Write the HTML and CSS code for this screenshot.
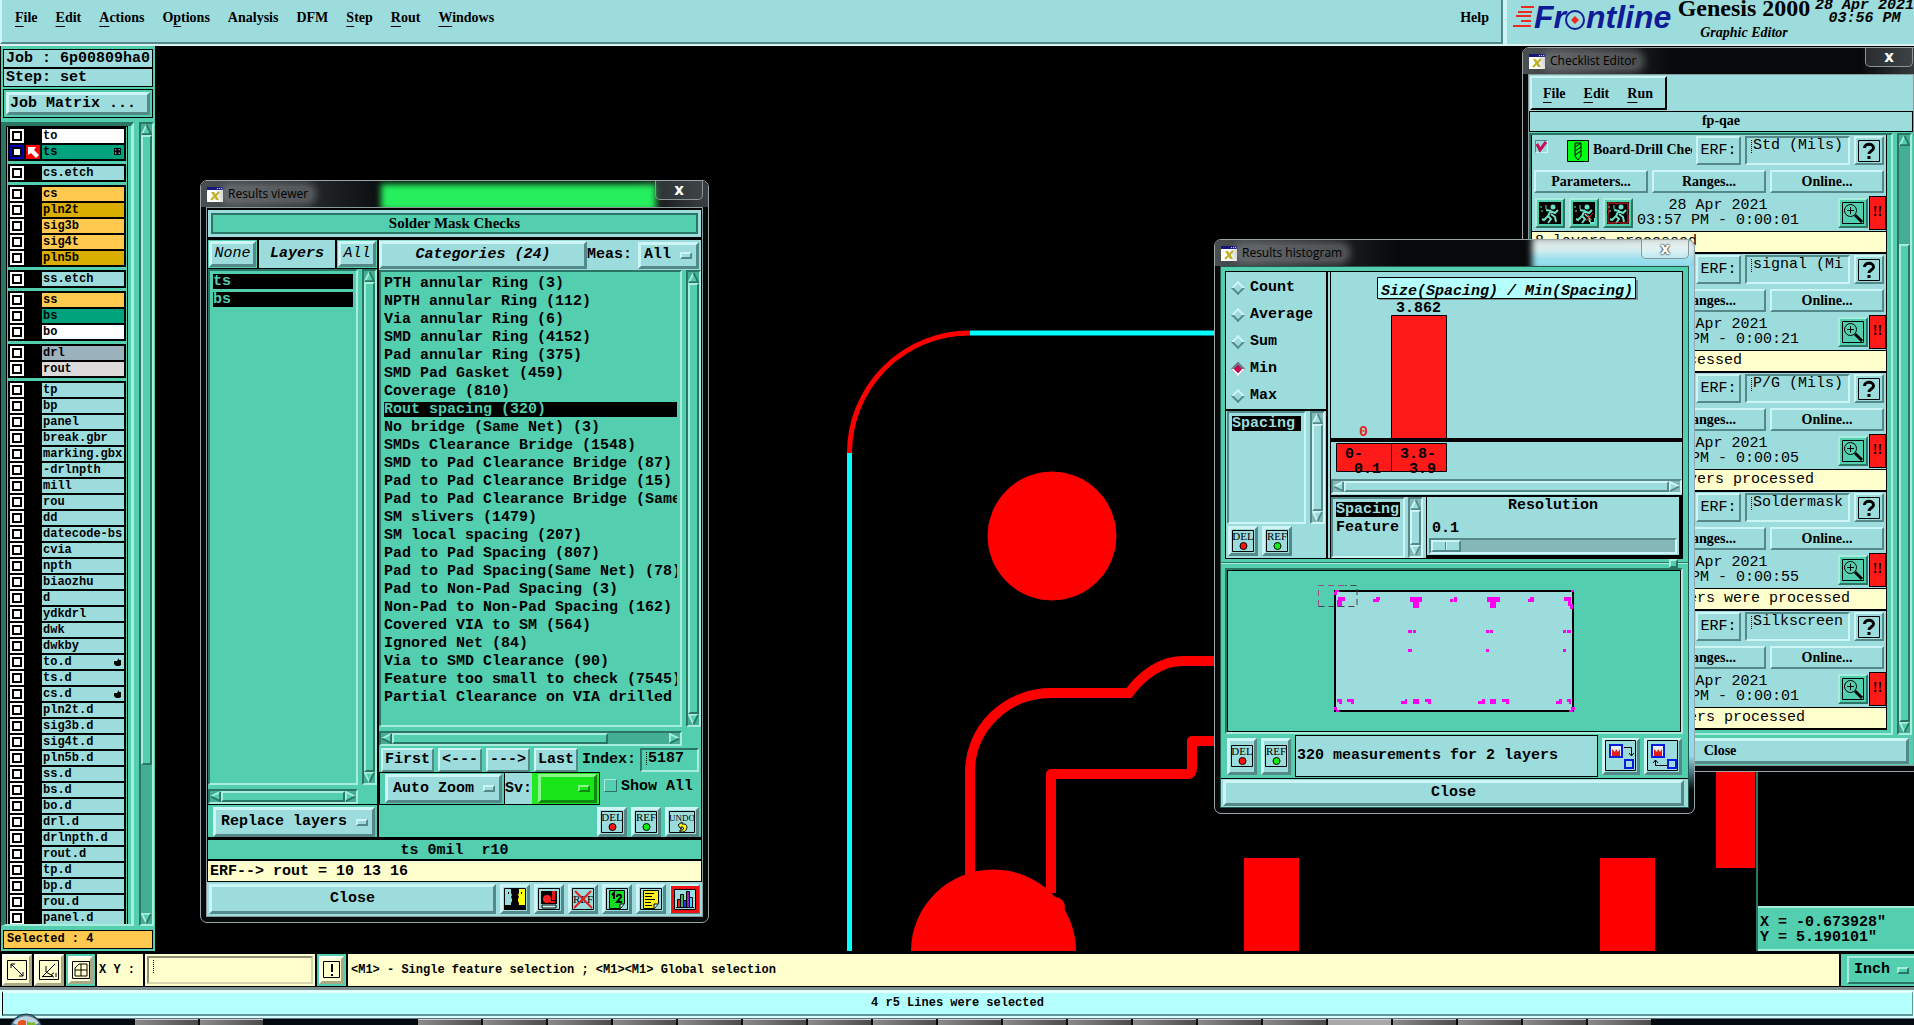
FILE: index.html
```
<!DOCTYPE html>
<html lang="en">
<head>
    <meta charset="UTF-8">
    <meta name="viewport" content="width=device-width, initial-scale=1.0">
    <title>Genesis 2000 - Graphic Editor</title>

    <link rel="stylesheet" href="styles.css">

</head>
<body>

    <!-- icons -->
    <svg class="defs" aria-hidden="true">
        <symbol id="up" viewBox="0 0 12 12"><path d="M6 0 L0 12 H12 Z" class="fill"/><path d="M6 1 L1 11" class="lt"/><path d="M6 1 L11 11 H1" class="dk"/></symbol>
        <symbol id="down" viewBox="0 0 12 12"><path d="M6 12 L0 0 H12 Z" class="fill"/><path d="M11 1 H1 L6 11" class="lt"/><path d="M11 1 L6 11" class="dk"/></symbol>
        <symbol id="left" viewBox="0 0 12 12"><path d="M0 6 L12 0 V12 Z" class="fill"/><path d="M11 1 L1 6" class="lt"/><path d="M1 6 L11 11 V1" class="dk"/></symbol>
        <symbol id="right" viewBox="0 0 12 12"><path d="M12 6 L0 0 V12 Z" class="fill"/><path d="M11 6 L1 1 V11" class="lt"/><path d="M1 11 L11 6" class="dk"/></symbol>

        <symbol id="xwin" viewBox="0 0 16 15"><path d="M0 0h16v15H0z" fill="#fff"/><path d="M0 0h16v3H0z" fill="#15157c"/><path d="M10 1h1v1h-1zM12 1h1v1h-1zM14 1h1v1h-1z" fill="#ccd"/><path d="M4 5h3l5 8H9z" fill="#c3b41c"/><path d="M12 5L4 13" stroke="#c3b41c" stroke-width="2"/></symbol>

        <symbol id="del" viewBox="0 0 22 22"><path d="M.5.5h21v21H.5z" fill="none" stroke="#000"/><text x="11" y="10" text-anchor="middle">DEL</text><circle cx="11.500" cy="16" r="3.500" fill="#f11" stroke="#000"/></symbol>
        <symbol id="ref" viewBox="0 0 22 22"><path d="M.5.5h21v21H.5z" fill="none" stroke="#000"/><text x="11" y="10" text-anchor="middle">REF</text><circle cx="11.500" cy="16" r="3.500" fill="#1e1" stroke="#000"/></symbol>
        <symbol id="undo" viewBox="0 0 26 22"><path d="M.5.5h25v21H.5z" fill="none" stroke="#000"/><text x="13" y="10" text-anchor="middle" class="narrow">UNDO</text><path d="M9 14l4-3v2h2c4 0 4 7-1 8h-3v-2h2c2 0 2-3 0-3h-1v2z" fill="#fe2" stroke="#000"/></symbol>

        <symbol id="faces" viewBox="0 0 22 22"><path d="M0 0h11v17H0z" fill="#9ddcdc"/><path d="M11 0h11v17H11z" fill="#ff1"/><path d="M.5.5h21v21H.5z" fill="none" stroke="#000"/><path d="M7 1h8v4l-1 2 1 2-1 2v2l1 2v2h7v5H0v-5h7v-2l1-2v-2L7 9l1-2-1-2zM4 4h1v2H4zM17 4h1v2h-1z"/></symbol>
        <symbol id="machine" viewBox="0 0 22 22"><path d="M.5.5h21v21H.5z" fill="#9ddcdc" stroke="#000"/><path d="M3 3h16v13H3z"/><circle cx="9" cy="11" r="4" fill="#f22"/><path d="M14 3h3v9h-3zM12 13h5v2h-5z" fill="#e11"/><path d="M4 17h14v3H4z" fill="#cff5f5" stroke="#000"/></symbol>
        <symbol id="noref" viewBox="0 0 22 22"><path d="M.5.5h21v21H.5z" fill="none" stroke="#000"/><text x="11" y="15" text-anchor="middle">REF</text><path d="M3 3l17 17M19 3L2 20" stroke="#e1221c" stroke-width="2"/></symbol>
        <symbol id="onetwo" viewBox="0 0 22 22"><path d="M.5.5h21v21H.5z" fill="none" stroke="#000"/><path d="M3.500 2.500h15v13l-4 5h-11z" fill="#15dd22" stroke="#000"/><path d="M18 16h-4v4" fill="#cff" stroke="#000"/><path d="M6 7l2-2v6M11 9c0-3 5-3 4 0l-4 5h5" fill="none" stroke="#000" stroke-width="2"/></symbol>
        <symbol id="note" viewBox="0 0 22 22"><path d="M.5.5h21v21H.5z" fill="none" stroke="#000"/><path d="M3.500 2.500h15v13l-4 5h-11z" fill="#fe2" stroke="#000"/><path d="M18 16h-4v4" fill="#cff" stroke="#000"/><path d="M5 5.500h9M5 8.500h7M5 11.500h10M5 14.500h6M5 17.500h7" stroke="#000"/></symbol>
        <symbol id="chart" viewBox="0 0 28 27"><path d="M1.500 1.500h25v24h-25z" fill="#9ddcdc" stroke="#f01212" stroke-width="3"/><path d="M3.500 3.500h21v20h-21z" fill="none" stroke="#000"/><path d="M5 21.500h18" stroke="#000"/><path d="M6.500 13.500h3v8h-3z" fill="#e22" stroke="#000"/><path d="M9.500 8.500h3v13h-3z" fill="#3b5" stroke="#000"/><path d="M12.500 14.500h3v7h-3z" fill="#23f" stroke="#000"/><path d="M15.500 5.500h3v16h-3z" fill="#92b" stroke="#000"/><path d="M18.500 11.500h3v10h-3z" fill="#3df" stroke="#000"/></symbol>

        <symbol id="tocopy" viewBox="0 0 32 32"><path d="M.5.5h30v30H.5z" fill="none" stroke="#000"/><path d="M5 5h12v12H5z" fill="#eee" stroke="#0a1be0" stroke-width="2"/><path d="M7 16V9l3 3 1-3 2 3 2-3v7z" fill="#e11b1b"/><path d="M20 20h8v8h-8z" fill="#9ddcdc" stroke="#0a1be0" stroke-width="2"/><path d="M19 7.500h7.500V16M24 13l2.500 3 2.500-3" fill="none" stroke="#000"/></symbol>
        <symbol id="fromcopy" viewBox="0 0 32 32"><path d="M.5.5h30v30H.5z" fill="none" stroke="#000"/><path d="M5 5h12v12H5z" fill="#eee" stroke="#0a1be0" stroke-width="2"/><path d="M7 16V9l3 3 1-3 2 3 2-3v7z" fill="#e11b1b"/><path d="M21 20h8v8h-8z" fill="#9ddcdc" stroke="#0a1be0" stroke-width="2"/><path d="M20 25.500H8.500V20M6 23l2.500-3 2.500 3" fill="none" stroke="#000"/></symbol>

        <symbol id="man" viewBox="0 0 22 22"><path d="M0 0h22v22H0z"/><circle cx="14" cy="5" r="2.500" fill="#6fe0c4"/><path d="M12 8l-3 6 3 3-3 4M10 13l-5 5-2-1M11 9l5 2 3-3M12 9L7 8M12 12l4 3 1 5" fill="none" stroke="#6fe0c4" stroke-width="2"/><path d="M1 5h2M6 4h2M2 9h2M6 6h2" stroke="#6fe0c4"/></symbol>
        <symbol id="mancut" viewBox="0 0 22 22"><use href="#man"/><path d="M13 12l6 6M20 11l-7 8" stroke="#d22"/><path d="M17 21h5v-5" stroke="#6fe0c4" fill="none" stroke-width="2"/></symbol>
        <symbol id="manframe" viewBox="0 0 22 22"><use href="#man"/><path d="M1 1h7l2 1 2-1h9v7l-1 2 1 2v9h-8l-2-1-2 1H1v-9l1-2-1-2z" fill="none" stroke="#e22"/></symbol>
        <symbol id="lens" viewBox="0 0 22 22"><path d="M.5.5h21v21H.5z" fill="#53ceaf" stroke="#000"/><circle cx="8.500" cy="8.500" r="6" fill="none" stroke="#000"/><path d="M5 8.500h7M8.500 5v7" stroke="#000"/><path d="M13 13l7 7" stroke="#000" stroke-width="3"/></symbol>
        <symbol id="drill" viewBox="0 0 22 22"><path d="M.5.5h21v21H.5z" fill="#0f1" stroke="#000"/><path d="M8 3h6v13l-3 4-3-4zM8 7l6-4M8 11l6-4M8 15l6-4" fill="none" stroke="#000"/></symbol>
        <symbol id="signal" viewBox="0 0 22 22"><path d="M.5.5h21v21H.5z" fill="#ffc84f" stroke="#000"/><path d="M4 16h6V6h8" fill="none" stroke="#000" stroke-width="2"/></symbol>
        <symbol id="help" viewBox="0 0 22 22"><path d="M.5.5h21v21H.5z" fill="none" stroke="#000"/><path d="M6.500 8c0-5 9-5 9 0 0 3-4.500 3-4.500 6M11 16V19" fill="none" stroke="#000" stroke-width="3"/></symbol>
        <symbol id="check" viewBox="0 0 13 13"><path d="M2 4l3 6 6-8" fill="none" stroke="#c0105a" stroke-width="3"/></symbol>

        <symbol id="diag" viewBox="0 0 20 20"><path d="M.5.5h19v19H.5z" fill="none" stroke="#000"/><path d="M4 8V4h4M4 4l12 12M16 12v4h-4" fill="none" stroke="#000"/></symbol>
        <symbol id="angle" viewBox="0 0 20 20"><path d="M.5.5h19v19H.5z" fill="none" stroke="#000"/><path d="M3 17L16 4M7 6v6l7 4M3 16.500h10M15 13c-3 0-3 4 0 4M17 13v4" fill="none" stroke="#000"/></symbol>
        <symbol id="grid" viewBox="0 0 18 18"><path d="M.5.5h17v17H.5z" fill="none" stroke="#000"/><path d="M3 7l4-4h8v12H3zM3 9h12M9 3v12" fill="none" stroke="#000"/></symbol>
        <symbol id="bang" viewBox="0 0 18 18"><path d="M.5.5h16v16H.5z" fill="none" stroke="#000"/><path d="M8 3h2v8H8zM8 13h2v2H8z"/></symbol>
        <symbol id="arrow" viewBox="0 0 14 14"><path d="M0 0h14v14H0z" fill="#f00"/><path d="M2 2h8L8 5l5 5-3 3-5-5-3 2z" fill="#fff"/></symbol>
        <symbol id="hand" viewBox="0 0 8 8"><path d="M0 3h3l2-3v2h2v5l-2 1H2L0 6z"/></symbol>
        <symbol id="pads" viewBox="0 0 7 7"><path d="M0 0h6v6H0z"/><path d="M1 1h1v1H1zM4 1h1v1H4zM1 4h1v1H1zM4 4h1v1H4z" fill="#fff"/></symbol>
    </svg>


    <header class="top teal">
        <nav class="menubar">
            <a href="#"><u>F</u>ile</a>
            <a href="#"><u>E</u>dit</a>
            <a href="#"><u>A</u>ctions</a>
            <a href="#">O<u>p</u>tions</a>
            <a href="#">Analysis</a>
            <a href="#">DFM</a>
            <a href="#"><u>S</u>tep</a>
            <a href="#"><u>R</u>out</a>
            <a href="#"><u>W</u>indows</a>
            <a href="#" class="last">Help</a>
        </nav>
        <div class="brand">
            <svg class="logo" width="160" height="42">
                <path d="M8 6h13v2H8zM5 11h14v2H5zM3 15h15v2H3zM8 20h10v2H8zM0 25h18v2H0z" fill="#f2281f"/>
                <text x="21" y="28">Fr</text>
                <circle cx="62" cy="20" r="9" fill="none" stroke="#101c96" stroke-width="2"/>
                <path d="M62 16l4 4-4 4-4-4z" fill="#f2281f"/>
                <text x="73" y="28">ntline</text>
            </svg>
            <div class="product">
                <b>Genesis 2000</b>
                <i>Graphic Editor</i>
            </div>
            <div class="clock">28 Apr 2021<br>03:56 PM</div>
        </div>
    </header>


    <main class="workspace">

        <aside class="side green">
            <div class="field">Job : 6p00809ha0</div>
            <div class="field">Step: set</div>
            <div class="matrix"><button type="button" class="btn teal">Job Matrix ...</button></div>
            <div class="layers">
                <div class="layer-view"><div class="layer-list" id="layers"></div></div>
                <div class="scrollbar v">
                    <svg><use href="#up"/></svg>
                    <div class="track"><div class="thumb part"></div></div>
                    <svg><use href="#down"/></svg>
                </div>
            </div>
            <div class="selected">Selected : 4</div>
        </aside>

        <svg class="canvas">
            <g transform="translate(-155 -46)" fill="none" stroke="#f00">
                <path d="M849.500 951V453M970 333H1214" stroke="#0ff" stroke-width="5"/>
                <path d="M849.500 453A120 120 0 0 1 970 333" stroke-width="5"/>
                <circle cx="1052" cy="536" r="64" fill="#f00"/>
                <path d="M970 890V772A81 79 0 0 1 1051 693H1129C1142 675 1162 661 1182 661H1214" stroke-width="10"/>
                <path d="M1051 893V774H1188Q1192 774 1192 768V741H1214" stroke-width="10" stroke-linejoin="round"/>
                <path d="M911 951A82 81 0 0 1 1076 951Z" fill="#f00" stroke="none"/>
                <circle cx="1055" cy="907" r="10" fill="#f00" stroke="none"/>
                <path d="M1244 858h55v93h-55zM1600 858h55v93h-55zM1716 760h39v108h-39z" fill="#f00" stroke="none"/>
                <path d="M1757 760V951" stroke="#2a7563" stroke-width="2"/>
            </g>
        </svg>

        <div class="coords green">X = -0.673928"<br>Y = 5.190101"</div>


        <!-- Checklist Editor -->
        <section class="window checklist">
            <div class="titlebar">
                <svg class="xicon"><use href="#xwin"/></svg><span class="caption">Checklist Editor</span>
                <button type="button" class="x" aria-label="Close window">x</button>
            </div>
            <div class="client teal">
                <nav class="menubar small">
                    <a href="#"><u>F</u>ile</a>
                    <a href="#"><u>E</u>dit</a>
                    <a href="#"><u>R</u>un</a>
                </nav>
                <div class="subject">fp-qae</div>
                <div class="checks green">
                    <div class="check-list teal" id="checks"></div>
                    <div class="scrollbar v">
                        <svg><use href="#up"/></svg>
                        <div class="track low"><div class="thumb"></div></div>
                        <svg><use href="#down"/></svg>
                    </div>
                </div>
                <div class="closebar green"><button type="button" class="btn teal serif">Close</button></div>
            </div>
        </section>


        <!-- Results viewer -->
        <section class="window viewer">
            <div class="titlebar">
                <span class="glow lime"></span>
                <svg class="xicon"><use href="#xwin"/></svg><span class="caption">Results viewer</span>
                <button type="button" class="x" aria-label="Close window">x</button>
            </div>
            <div class="client green">
                <div class="heading">Solder Mask Checks</div>

                <div class="columns">
                    <div class="col-layers">
                        <div class="col-head">
                            <div class="pad"><button type="button" class="btn teal">None</button></div>
                            <b class="teal">Layers</b>
                            <div class="pad"><button type="button" class="btn teal">All</button></div>
                        </div>
                        <div class="scrolled">
                            <ul class="listbox">
                                <li class="on">ts</li>
                                <li class="on">bs</li>
                            </ul>
                            <div class="scrollbar v">
                                <svg><use href="#up"/></svg><div class="track"><div class="thumb"></div></div><svg><use href="#down"/></svg>
                            </div>
                            <div class="scrollbar h">
                                <svg><use href="#left"/></svg><div class="track"><div class="thumb"></div></div><svg><use href="#right"/></svg>
                            </div>
                        </div>
                        <div class="replace">
                            <div class="option teal">
                                <select aria-label="Layer mode"><option>Replace layers</option></select>
                            </div>
                        </div>
                    </div>

                    <div class="col-cats">
                        <div class="cat-head teal">
                            <button type="button" class="btn">Categories (24)</button>
                            <label for="meas">Meas:</label>
                            <div class="option"><select id="meas"><option>All</option></select></div>
                        </div>
                        <div class="scrolled">
                            <ul class="listbox">
                                <li>PTH annular Ring (3)</li>
                                <li>NPTH annular Ring (112)</li>
                                <li>Via annular Ring (6)</li>
                                <li>SMD annular Ring (4152)</li>
                                <li>Pad annular Ring (375)</li>
                                <li>SMD Pad Gasket (459)</li>
                                <li>Coverage (810)</li>
                                <li class="on">Rout spacing (320)</li>
                                <li>No bridge (Same Net) (3)</li>
                                <li>SMDs Clearance Bridge (1548)</li>
                                <li>SMD to Pad Clearance Bridge (87)</li>
                                <li>Pad to Pad Clearance Bridge (15)</li>
                                <li>Pad to Pad Clearance Bridge (Same</li>
                                <li>SM slivers (1479)</li>
                                <li>SM local spacing (207)</li>
                                <li>Pad to Pad Spacing (807)</li>
                                <li>Pad to Pad Spacing(Same Net) (78)</li>
                                <li>Pad to Non-Pad Spacing (3)</li>
                                <li>Non-Pad to Non-Pad Spacing (162)</li>
                                <li>Covered VIA to SM (564)</li>
                                <li>Ignored Net (84)</li>
                                <li>Via to SMD Clearance (90)</li>
                                <li>Feature too small to check (7545)</li>
                                <li>Partial Clearance on VIA drilled</li>
                            </ul>
                            <div class="scrollbar v">
                                <svg><use href="#up"/></svg><div class="track"><div class="thumb"></div></div><svg><use href="#down"/></svg>
                            </div>
                            <div class="scrollbar h">
                                <svg><use href="#left"/></svg><div class="track"><div class="thumb part"></div></div><svg><use href="#right"/></svg>
                            </div>
                        </div>
                        <div class="nav">
                            <button type="button" class="btn teal">First</button>
                            <button type="button" class="btn teal">&lt;---</button>
                            <button type="button" class="btn teal">---&gt;</button>
                            <button type="button" class="btn teal">Last</button>
                            <label for="index">Index:</label>
                            <input id="index" class="caret" type="text" value="5187">
                        </div>
                        <div class="zoomrow">
                            <div class="zoombox">
                                <div class="option teal"><select aria-label="Zoom mode"><option>Auto Zoom</option></select></div>
                                <label for="sv" class="teal">Sv:</label>
                                <div class="svbox"><div class="option lime"><select id="sv"><option label=" "></option></select></div></div>
                            </div>
                            <label class="tick"><input type="checkbox">Show All</label>
                        </div>
                        <div class="tools">
                            <button type="button" class="btn teal icon" aria-label="Delete"><svg><use href="#del"/></svg></button>
                            <button type="button" class="btn teal icon" aria-label="Reference"><svg><use href="#ref"/></svg></button>
                            <button type="button" class="btn teal icon wide" aria-label="Undo"><svg><use href="#undo"/></svg></button>
                        </div>
                    </div>
                </div>

                <div class="note">ts 0mil&nbsp; r10</div>
                <div class="erf">ERF--&gt; rout = 10 13 16</div>
                <div class="foot teal">
                    <button type="button" class="btn grow">Close</button>
                    <button type="button" class="btn icon" aria-label="Compare"><svg><use href="#faces"/></svg></button>
                    <button type="button" class="btn icon" aria-label="Machine"><svg><use href="#machine"/></svg></button>
                    <button type="button" class="btn icon" aria-label="No reference"><svg><use href="#noref"/></svg></button>
                    <button type="button" class="btn icon" aria-label="Numbers"><svg><use href="#onetwo"/></svg></button>
                    <button type="button" class="btn icon" aria-label="Notes"><svg><use href="#note"/></svg></button>
                    <button type="button" class="btn icon full" aria-label="Histogram"><svg><use href="#chart"/></svg></button>
                </div>
            </div>
        </section>


        <!-- Results histogram -->
        <section class="window histogram">
            <div class="titlebar">
                <span class="glow pale"></span>
                <svg class="xicon"><use href="#xwin"/></svg><span class="caption">Results histogram</span>
                <button type="button" class="x light" aria-label="Close window">x</button>
            </div>
            <div class="client green">
                <div class="hist-top teal">
                    <div class="hist-left">
                        <fieldset class="modes">
                            <label><input type="radio" name="mode">Count</label>
                            <label><input type="radio" name="mode">Average</label>
                            <label><input type="radio" name="mode">Sum</label>
                            <label><input type="radio" name="mode" checked>Min</label>
                            <label><input type="radio" name="mode">Max</label>
                        </fieldset>
                        <div class="scrolled">
                            <ul class="listbox"><li class="on">Spacing</li></ul>
                            <div class="scrollbar v">
                                <svg><use href="#up"/></svg><div class="track"><div class="thumb"></div></div><svg><use href="#down"/></svg>
                            </div>
                        </div>
                        <div class="tools">
                            <button type="button" class="btn icon" aria-label="Delete"><svg><use href="#del"/></svg></button>
                            <button type="button" class="btn icon" aria-label="Reference"><svg><use href="#ref"/></svg></button>
                        </div>
                    </div>

                    <div class="hist-right">
                        <svg class="plot">
                            <path d="M48 5h259v20H48z" fill="#7a8c8c"/>
                            <path d="M46.500 2.500h258v21h-258z" fill="#b4fffe" stroke="#000"/>
                            <text x="50" y="20" class="title">Size(Spacing) / Min(Spacing)</text>
                            <text x="65" y="37">3.862</text>
                            <path d="M60.500 40.500h55v125h-55z" fill="#ff1a1a" stroke="#000"/>
                            <text x="28" y="161" class="zero">0</text>
                            <rect y="163" width="100%" height="4"/>
                            <path d="M5.500 168.500h55v28h-55zM60.500 168.500h55v28h-55z" fill="#ff1a1a" stroke="#000"/>
                            <text x="14" y="183">0-</text>
                            <text x="23" y="198">0.1</text>
                            <text x="69" y="183">3.8-</text>
                            <text x="78" y="198">3.9</text>
                        </svg>
                        <div class="scrollbar h">
                            <svg><use href="#left"/></svg><div class="track"><div class="thumb"></div></div><svg><use href="#right"/></svg>
                        </div>
                        <div class="res">
                            <ul class="listbox"><li class="on">Spacing</li><li>Feature</li></ul>
                            <div class="scrollbar v">
                                <svg><use href="#up"/></svg><div class="track"><div class="thumb"></div></div><svg><use href="#down"/></svg>
                            </div>
                            <div class="resolution">
                                <label for="resolution">Resolution</label>
                                <output for="resolution">0.1</output>
                                <input id="resolution" type="range" min="0" max="10" step="0.1" value="0">
                            </div>
                        </div>
                    </div>
                </div>

                <div class="sash"><span></span></div>

                <svg class="preview">
                    <rect x="108" y="21" width="238" height="120" fill="#9ddcdc" stroke="#000" stroke-width="2"/>
                    <g fill="#f0e">
                        <path d="M108 20h4v2h-4zM107 22h3v3h-3zM344 20h3v2h-3zM107 137h3v3h-3zM109 140h3v2h-3zM344 137h4v3h-4zM342 140h4v2h-4z"/>
                        <path d="M111 27h7v4h-7zM110 30h5v7h-5zM149 27h4v3h-4zM146 29h6v3h-6zM183 27h12v5h-12zM186 32h6v6h-6zM227 27h3v5h-3zM223 29h3v3h-3zM260 27h13v5h-13zM263 32h6v6h-6zM303 27h4v3h-4zM301 29h6v3h-6zM337 27h7v4h-7zM341 27h3v9h-3zM343 34h3v5h-3z"/>
                        <path d="M181 60h4v3h-4zM186 60h3v3h-3zM259 60h3v3h-3zM263 60h3v3h-3zM336 60h3v3h-3zM340 60h4v3h-4zM181 79h4v3h-4zM259 79h3v3h-3zM336 79h3v3h-3z"/>
                        <path d="M110 129h5v3h-5zM112 129h3v5h-3zM120 129h7v3h-7zM124 129h3v5h-3zM174 131h6v3h-6zM178 129h2v5h-2zM186 129h6v5h-6zM198 129h6v3h-6zM201 129h3v5h-3zM251 131h6v3h-6zM255 129h3v5h-3zM263 129h6v5h-6zM275 129h6v3h-6zM279 129h3v5h-3zM329 131h6v3h-6zM332 129h3v5h-3zM340 129h4v3h-4zM342 129h2v5h-2z"/>
                    </g>
                    <path d="M91.500 36V15.500H120" fill="none" stroke="#9b4f86" stroke-dasharray="6 4"/>
                    <path d="M91.500 36.500H130V15.500H118" fill="none" stroke="#444" stroke-dasharray="6 4"/>
                </svg>

                <div class="summary teal">
                    <button type="button" class="btn icon" aria-label="Delete"><svg><use href="#del"/></svg></button>
                    <button type="button" class="btn icon" aria-label="Reference"><svg><use href="#ref"/></svg></button>
                    <div class="count">320 measurements for 2 layers</div>
                    <button type="button" class="btn icon big" aria-label="Copy to"><svg><use href="#tocopy"/></svg></button>
                    <button type="button" class="btn icon big" aria-label="Copy from"><svg><use href="#fromcopy"/></svg></button>
                </div>
                <div class="closebar teal"><button type="button" class="btn">Close</button></div>
            </div>
        </section>

    </main>


    <footer class="prompt">
        <button type="button" class="btn cream icon" aria-label="Snap"><svg><use href="#diag"/></svg></button>
        <button type="button" class="btn cream icon" aria-label="Angle"><svg><use href="#angle"/></svg></button>
        <div class="well"><button type="button" class="btn cream icon" aria-label="Grid"><svg><use href="#grid"/></svg></button></div>
        <label for="xy">X Y :</label>
        <div class="xybox"><input id="xy" class="caret" type="text"></div>
        <div class="well"><button type="button" class="btn cream icon" aria-label="Alert"><svg><use href="#bang"/></svg></button></div>
        <div class="hint">&lt;M1&gt; - Single feature selection ; &lt;M1&gt;&lt;M1&gt; Global selection</div>
        <div class="units green"><div class="option green"><select aria-label="Units"><option>Inch</option></select></div></div>
    </footer>
    <div class="status"><div>4 r5 Lines were selected</div></div>
    <div class="taskbar" id="taskbar">
        <svg class="orb" width="34" height="34" viewBox="0 0 34 34"><circle cx="17" cy="17" r="16" fill="#54798f" stroke="#16303f"/><path d="M4 10c6-9 20-9 26 0-8 4-18 4-26 0z" fill="#bcd3df"/><path d="M9 9c3-3 6-2 8-1v7H8z" fill="#e8501e"/><path d="M18 8c3 2 5 2 8 1v6h-8z" fill="#7fb52c"/></svg>
    </div>

    <script src="script.js"></script>

</body>
</html>
```
FILE: styles.css
```
*, *::after {
    box-sizing: border-box;
}

body {
    margin: 0;
    height: 100vh;
    display: flex;
    flex-direction: column;
    overflow: hidden;
    background: #000;
    color: #000;
    font: bold 15px/18px "Liberation Mono", monospace;
}

button, input, select {
    font: inherit;
    color: inherit;
    margin: 0;
}

ul {
    margin: 0;
    list-style: none;
}

a {
    color: inherit;
    text-decoration: none;
}

u {
    text-underline-offset: 4px;
}

.defs {
    display: none;
}

symbol text {
    font: 11px "Liberation Serif", serif;
}

symbol .narrow {
    font-size: 9px;
}

/* colour themes: face, light edge, dark edge, trough */
.teal {
    --bg: #9ddcdc;
    --lt: #cdf5f5;
    --dk: #548889;
    --trough: #84b8b8;
    background: var(--bg);
}

.green {
    --bg: #53ceaf;
    --lt: #a6eedb;
    --dk: #2a7563;
    --trough: #43ae93;
    background: var(--bg);
}

.cream {
    --bg: #ffffce;
    --lt: #ffffee;
    --dk: #a9a98a;
}

.lime {
    --bg: #19e619;
    --lt: #8af58a;
    --dk: #0e8a0e;
}

.fill { fill: var(--bg); }
.lt { fill: none; stroke: var(--lt); stroke-width: 2; }
.dk { fill: none; stroke: var(--dk); stroke-width: 2; }

.btn, .option {
    background: var(--bg);
    border: 3px solid;
    border-color: var(--lt) var(--dk) var(--dk) var(--lt);
    border-radius: 0;
    padding: 0;
}

.icon {
    width: 30px;
    height: 30px;
    flex: none;
    display: grid;
    place-items: center;
}

.icon svg {
    width: 22px;
    height: 22px;
}

.icon.wide { width: 34px; }
.icon.wide svg { width: 26px; }
.icon.full svg { width: 28px; height: 27px; margin: -2px; }

.option {
    display: flex;
    align-items: center;
    position: relative;
}

.option select {
    appearance: none;
    border: 0;
    background: none;
    padding: 0 20px 0 5px;
    flex: 1;
    min-width: 0;
    line-height: 20px;
}

.option::after {
    content: "";
    position: absolute;
    right: 4px;
    width: 12px;
    height: 7px;
    border: 2px solid;
    border-color: var(--lt) var(--dk) var(--dk) var(--lt);
    pointer-events: none;
}

/* dotted insertion mark at the start of a text field */
.caret {
    background-image: repeating-linear-gradient(#000 0 1px, transparent 1px 2px);
    background-size: 1px 14px;
    background-position: 4px 2px;
    background-repeat: no-repeat;
}


/* scrollbars and list boxes */
.scrollbar {
    display: flex;
    background: var(--trough);
    border: 2px solid;
    border-color: var(--dk) var(--lt) var(--lt) var(--dk);
    min-width: 0;
    min-height: 0;
}

.scrollbar svg {
    width: 11px;
    height: 11px;
    flex: none;
}

.scrollbar.v { flex-direction: column; width: 15px; }
.scrollbar.h { height: 15px; flex: none; }

.track {
    flex: 1;
    display: flex;
    flex-direction: inherit;
    min-width: 0;
    min-height: 0;
}

.thumb {
    flex: 1;
    background: var(--bg);
    border: 2px solid;
    border-color: var(--lt) var(--dk) var(--dk) var(--lt);
}

.thumb.part { flex: 0 0 78%; }
.v .thumb.part { flex-basis: 81%; }
.track.low { padding-top: 98px; }

.scrolled {
    flex: 1;
    min-height: 0;
    display: grid;
    grid-template-columns: 1fr 15px;
    grid-template-rows: 1fr auto;
    gap: 4px;
    background: var(--bg);
}

.listbox {
    border: 2px solid;
    border-color: var(--dk) var(--lt) var(--lt) var(--dk);
    padding: 3px;
    overflow: hidden;
    min-width: 0;
}

.listbox li {
    height: 15px;
    line-height: 15px;
    margin-bottom: 3px;
    white-space: pre;
    overflow: hidden;
}

.listbox .on {
    background: #000;
    color: var(--bg);
}


/* top bar */
.top {
    height: 46px;
    display: flex;
    font: bold 14px/18px "Liberation Serif", serif;
    border-bottom: 2px solid #daf2f2;
}

.menubar {
    flex: 1;
    display: flex;
    gap: 18px;
    padding: 9px 12px 8px 13px;
    border: solid;
    border-width: 0 2px 2px 2px;
    border-color: var(--dk) var(--dk) var(--dk) var(--lt);
}

.menubar .last {
    margin-left: auto;
}

.brand {
    display: flex;
    border-left: 4px solid var(--lt);
    padding-left: 6px;
    overflow: hidden;
}

.logo text {
    font: italic bold 32px "Liberation Sans", sans-serif;
    fill: #101c96;
}

.product {
    width: 142px;
    display: flex;
    flex-direction: column;
    align-items: center;
}

.product b {
    font-size: 24px;
    line-height: 16px;
    white-space: nowrap;
}

.product i {
    margin-top: 8px;
}

.clock {
    font: italic bold 15px/13px "Liberation Mono", monospace;
    text-align: center;
    margin-top: -1px;
}


/* job side panel */
.workspace {
    flex: 1;
    min-height: 0;
    position: relative;
    display: flex;
    overflow: hidden;
}

.side {
    width: 155px;
    margin-bottom: 2px;
    border-left: 1px solid #000;
    padding: 3px 2px 2px;
    display: flex;
    flex-direction: column;
}

.field {
    border: 1px solid #000;
    background: #9ddcdc;
    height: 19px;
    padding-left: 2px;
    line-height: 18px;
    white-space: nowrap;
}

.matrix {
    border: 1px solid #000;
    margin: 2px 0 4px;
    padding: 2px;
    display: flex;
}

.matrix .btn {
    flex: 1;
    text-align: left;
    padding-left: 1px;
    height: 23px;
    line-height: 17px;
}

.layers {
    flex: 1;
    min-height: 0;
    display: flex;
    gap: 5px;
    margin: 0 -1px 4px -2px;
}

.layer-view {
    flex: 1;
    border: solid;
    border-width: 4px 3px 2px 5px;
    border-color: var(--dk) var(--lt) var(--lt) var(--dk);
    overflow: hidden;
}

.layer-list {
    border: solid #000;
    border-width: 1px 1px 0 1px;
    font-size: 12px;
    margin-right: 3px;
}

.layer-group {
    background: #000;
    padding: 1px;
    margin: 0 1px 3px;
}

.layer {
    height: 16px;
    display: grid;
    grid-template-columns: 14px 14px 1fr;
    gap: 2px;
    padding: 1px;
}

.layer input {
    appearance: none;
    width: 14px;
    height: 14px;
    border: 2px solid #fff;
    outline: 2px solid #000;
    outline-offset: -4px;
    background: #fff;
}

.layer.current input {
    border-color: #00b;
}

.layer svg {
    width: 14px;
    height: 14px;
}

.layer span {
    display: flex;
    justify-content: space-between;
    align-items: center;
    padding-left: 1px;
    line-height: 14px;
    white-space: nowrap;
    background: #9ddcdc;
}

.layer span svg {
    width: 8px;
    height: 8px;
    margin-right: 2px;
}

.layer .white { background: #fff; }
.layer .jade { background: #00a37c; }
.layer .orange { background: #ffc84f; }
.layer .gold { background: #daae00; }
.layer .slate { background: #9bb1bc; }
.layer .silver { background: #dcdada; }

.selected {
    height: 19px;
    border: 1px solid #000;
    background: #ffc84f;
    font-size: 12px;
    line-height: 17px;
    padding-left: 3px;
}

.canvas {
    flex: 1;
    min-width: 0;
    height: 100%;
}

.coords {
    position: absolute;
    right: 0;
    bottom: 2px;
    width: 156px;
    height: 45px;
    border-top: 2px solid var(--lt);
    border-bottom: 2px solid var(--lt);
    padding: 7px 2px 5px;
    line-height: 15px;
}


/* floating windows */
.window {
    position: absolute;
    display: flex;
    flex-direction: column;
    background: #07090b;
    border: 1px solid #9aa5a8;
    border-radius: 7px;
    padding: 0 5px 5px;
}

.titlebar {
    height: 26px;
    flex: none;
    display: flex;
    align-items: center;
    position: relative;
    margin: 0 -5px;
    padding-left: 6px;
    border-radius: 6px 6px 0 0;
    background: linear-gradient(90deg, #4a4f51, #07090b 38%, #07090b 85%, #3a4042);
    overflow: hidden;
}

.xicon {
    width: 16px;
    height: 15px;
    position: relative;
}

.caption {
    position: relative;
    padding: 0 5px;
    border-radius: 10px;
    font: 12px/16px "Open Sans", sans-serif;
    background: rgba(140, 145, 147, .45);
    box-shadow: 0 0 7px 4px rgba(140, 145, 147, .45);
}

.x {
    position: absolute;
    right: 5px;
    top: 0;
    width: 48px;
    height: 19px;
    padding: 0;
    background: rgba(70, 75, 78, .5);
    border: 1px solid #8c9597;
    border-top: 0;
    border-radius: 0 0 5px 5px;
    color: #fff;
    font: bold 15px/13px "DejaVu Sans", sans-serif;
}

.x.light {
    background: rgba(240, 250, 250, .35);
    color: #fff;
    text-shadow: 0 0 2px #222, 0 0 2px #222;
}

.glow {
    position: absolute;
    top: 3px;
    bottom: -4px;
    filter: blur(3px);
}

.glow.lime {
    left: 180px;
    width: 275px;
    background: #26ef5d;
}

.glow.pale {
    right: -4px;
    width: 166px;
    top: -4px;
    background: linear-gradient(#b9c9c9, #e9f3f0 35%, #8edcee 70%, #a5e8f2);
}

.client {
    flex: 1;
    min-height: 0;
    display: flex;
    flex-direction: column;
    border: 1px solid #8b9b9b;
}

.closebar {
    padding: 1px 4px 1px 2px;
    display: flex;
}

.closebar .btn {
    flex: 1;
    height: 26px;
    line-height: 20px;
}


/* results viewer */
.viewer {
    left: 200px;
    top: 134px;
    width: 509px;
    height: 743px;
}

.viewer .client {
    background: #000;
    padding: 2px 1px 0;
}

.heading {
    height: 27px;
    flex: none;
    border: 3px solid #9ddcdc;
    outline: 2px solid var(--dk);
    outline-offset: -5px;
    background: var(--bg);
    text-align: center;
    font: bold 15px/20px "Liberation Serif", serif;
}

.columns {
    flex: 1;
    min-height: 0;
    display: flex;
    gap: 2px;
    margin: 3px 0;
}

.col-layers {
    width: 169px;
    display: flex;
    flex-direction: column;
    gap: 1px;
}

.col-head {
    height: 28px;
    display: grid;
    grid-template-columns: 49px 1fr 40px;
    gap: 2px;
    font-style: italic;
    text-align: center;
}

.col-head b {
    line-height: 28px;
}

.pad {
    background: var(--bg);
    padding: 1px;
    display: grid;
}

.col-head .btn {
    font-weight: normal;
    line-height: 20px;
}

.col-layers .listbox li {
    width: 140px;
}

.replace {
    height: 32px;
    background: var(--bg);
    padding: 2px 2px 0 5px;
}

.replace .option {
    height: 30px;
}

.col-cats {
    flex: 1;
    min-width: 0;
    display: flex;
    flex-direction: column;
    background: var(--bg);
}

.cat-head {
    height: 30px;
    display: flex;
    align-items: center;
    padding-right: 2px;
}

.cat-head .btn {
    width: 208px;
    height: 28px;
    font-style: italic;
}

.cat-head .option {
    width: 61px;
    height: 27px;
    margin-left: auto;
}

.cat-head .option select {
    padding-left: 3px;
}

.col-cats .listbox {
    padding: 4px 3px;
}

.nav {
    height: 26px;
    display: flex;
    align-items: center;
    gap: 4px;
    padding: 2px 2px 0;
}

.nav .btn {
    height: 24px;
    flex: 0 0 44px;
    border-width: 2px;
    line-height: 18px;
    white-space: nowrap;
}

.nav .btn:first-child {
    flex-basis: 53px;
}

.nav input {
    flex: 1;
    min-width: 0;
    height: 24px;
    padding: 0 0 4px 6px;
    background-color: var(--bg);
    border: 2px solid;
    border-color: var(--dk) var(--lt) var(--lt) var(--dk);
}

.zoomrow {
    height: 33px;
    display: flex;
}

.zoombox {
    width: 221px;
    display: flex;
    border: 1px solid #000;
    line-height: 32px;
}

.zoombox > .option {
    width: 117px;
    margin: 1px 2px 1px 5px;
}

.zoombox label {
    border-left: 1px solid #000;
}

.svbox {
    flex: 1;
    background: #22ea22;
    padding: 1px 2px 1px 6px;
    display: grid;
}

.tick {
    display: flex;
    gap: 4px;
    padding: 6px 0 0 4px;
}

.tick input {
    appearance: none;
    width: 13px;
    height: 13px;
    margin-top: 1px;
    border: 1px solid;
    border-color: var(--lt) var(--dk) var(--dk) var(--lt);
}

.tools {
    display: flex;
    gap: 4px;
    padding: 2px;
}

.viewer .tools {
    justify-content: flex-end;
    height: 32px;
}

.note {
    height: 19px;
    background: var(--bg);
    text-align: center;
    line-height: 21px;
}

.erf {
    height: 20px;
    margin: 2px 0 1px;
    padding-left: 2px;
    background: #ffffce;
    line-height: 22px;
}

.foot {
    display: flex;
    gap: 4px;
    padding: 2px;
    margin: 0 -1px;
}

.foot .grow {
    flex: 1;
}


/* histogram */
.histogram {
    right: 219px;
    top: 193px;
    width: 481px;
    height: 575px;
    background: linear-gradient(transparent 90%, #07090b 96%), linear-gradient(90deg, #07090b 97%, #8fdcf0 99%);
}

.histogram .client {
    border-color: #23594d;
}

.hist-top {
    margin: 4px 5px 0 4px;
    height: 288px;
    flex: none;
    display: flex;
    background: var(--bg);
    border: 1px solid #000;
}

.hist-left {
    width: 102px;
    display: flex;
    flex-direction: column;
    border-right: 2px solid #000;
}

.modes {
    height: 139px;
    margin: 0;
    padding: 2px 0 0 5px;
    border: 0;
    border-bottom: 2px solid #000;
    display: grid;
    grid-auto-rows: 27px;
    min-width: 0;
}

.modes label {
    display: flex;
    align-items: center;
    gap: 7px;
}

.modes input {
    appearance: none;
    width: 10px;
    height: 10px;
    margin-left: 2px;
    rotate: 45deg;
    border: 2px solid;
    border-color: var(--lt) var(--dk) var(--dk) var(--lt);
}

.modes input:checked {
    background: #c8084e;
    border-color: var(--dk) #e9ffff #e9ffff var(--dk);
}

.hist-left .scrolled {
    grid-template-rows: 1fr;
    padding: 0 1px;
}

.hist-right {
    flex: 1;
    min-width: 0;
    margin-left: 2px;
    display: flex;
    flex-direction: column;
    border-left: 1px solid #000;
}

.plot {
    width: 100%;
    height: 207px;
    padding-top: 3px;
    flex: none;
}

.plot text {
    font: bold 15px "Liberation Mono", monospace;
}

.plot .title {
    font-style: italic;
}

.plot .zero {
    fill: #e22;
}

.res {
    flex: 1;
    min-height: 0;
    margin-top: 1px;
    display: flex;
    gap: 3px;
    border-top: 2px solid #000;
}

.res .listbox {
    width: 74px;
}

.resolution {
    flex: 1;
    display: flex;
    flex-direction: column;
    border: solid #000;
    border-width: 0 3px 3px 1px;
    padding: 0 2px 1px;
}

.resolution label {
    text-align: center;
}

.resolution output {
    margin-top: auto;
    padding-left: 3px;
}

.resolution input {
    appearance: none;
    width: 100%;
    height: 16px;
    background: var(--trough);
    border: 2px solid;
    border-color: var(--dk) var(--lt) var(--lt) var(--dk);
}

.resolution input::-webkit-slider-thumb {
    appearance: none;
    box-sizing: border-box;
    width: 30px;
    height: 12px;
    background: linear-gradient(90deg, transparent 12px, var(--dk) 12px 13px, var(--lt) 13px 14px, transparent 14px), var(--bg);
    border: 2px solid;
    border-color: var(--lt) var(--dk) var(--dk) var(--lt);
}

.sash {
    height: 9px;
    flex: none;
    display: flex;
    justify-content: flex-end;
    padding-right: 10px;
    background: linear-gradient(transparent 3px, var(--dk) 3px 4px, var(--lt) 4px 5px, transparent 5px);
}

.sash span {
    width: 9px;
    background: var(--bg);
    border: 2px solid;
    border-color: var(--lt) var(--dk) var(--dk) var(--lt);
}

.preview {
    flex: 1;
    min-height: 0;
    margin: 0 5px 0 4px;
    border: 2px solid;
    border-color: var(--dk) var(--lt) var(--lt) var(--dk);
    outline: 1px solid #000;
    outline-offset: -3px;
}

.summary {
    height: 44px;
    display: flex;
    align-items: center;
    gap: 4px;
    padding: 1px 6px;
    background: #53ceaf;
}

.summary .btn {
    height: 37px;
}

.summary .big {
    width: 38px;
}

.summary .big svg {
    width: 32px;
    height: 32px;
    margin: -1px;
}

.count {
    flex: 1;
    align-self: stretch;
    border: 1px solid #000;
    background: var(--bg);
    padding-left: 1px;
    line-height: 40px;
}

.histogram .closebar {
    border-top: 1px solid #000;
}


/* checklist */
.checklist {
    right: -6px;
    top: 1px;
    width: 398px;
    height: 725px;
}

.checklist .x {
    right: 6px;
}

.checklist .client {
    font: bold 14px/18px "Liberation Serif", serif;
}

.checklist .small {
    flex: none;
    align-self: flex-start;
    width: 137px;
    height: 34px;
    margin: 1px;
    padding: 7px 11px;
    border: 2px solid;
    border-color: var(--lt) #000 #000 var(--lt);
}

.subject {
    height: 21px;
    flex: none;
    border: 1px solid #000;
    text-align: center;
}

.checks {
    flex: 1;
    min-height: 0;
    display: flex;
    gap: 4px;
    padding: 1px 1px 2px 0;
}

.check-list {
    flex: 1;
    min-width: 0;
    overflow: hidden;
    border: 2px solid;
    border-color: #2a7563 #a6eedb #a6eedb #2a7563;
    background: #53ceaf;
    padding-right: 4px;
}

.check {
    height: 119px;
    border: solid #000;
    border-width: 0 1px 2px 1px;
    background: var(--bg);
}

.check .btn, .check .standard {
    border-width: 2px;
}

.check-head {
    height: 32px;
    display: flex;
    gap: 4px;
    padding: 1px 2px 0 3px;
}

.enabled {
    display: grid;
    width: 13px;
    height: 13px;
    margin: 4px 15px 0 0;
}

.enabled > * {
    grid-area: 1 / 1;
    width: 13px;
    height: 13px;
}

.enabled input {
    appearance: none;
    border: 1px solid;
    border-color: var(--dk) var(--lt) var(--lt) var(--dk);
}

.enabled svg {
    pointer-events: none;
}

.check-head > svg {
    width: 22px;
    height: 22px;
    margin-top: 4px;
    flex: none;
}

.check-head .name {
    flex: 1;
    min-width: 0;
    overflow: hidden;
    white-space: nowrap;
    line-height: 28px;
}

.check-head .erf-btn, .standard, .when {
    font: 15px/18px "Liberation Mono", monospace;
}

.erf-btn {
    width: 45px;
}

.check-head .btn {
    height: 29px;
}

.check-head .standard {
    width: 105px;
    height: 29px;
    padding: 0 0 11px 6px;
    background-color: var(--bg);
    border-color: var(--dk) var(--lt) var(--lt) var(--dk);
    border-style: solid;
}

.check-btns {
    display: grid;
    grid-template-columns: 1fr 1fr 1fr;
    gap: 4px;
    padding: 3px 2px 0;
}

.check-btns .btn {
    height: 23px;
    line-height: 18px;
}

.check-run {
    display: flex;
    align-items: center;
    gap: 4px;
    height: 36px;
    margin-top: 2px;
    padding-left: 3px;
}

.when {
    width: 162px;
    text-align: center;
    line-height: 15px;
    white-space: nowrap;
}

.check-run .green.zoom {
    margin-left: auto;
}

.flag {
    width: 17px;
    height: 34px;
    border: 1px solid #000;
    background: #ff1a1a;
    text-align: center;
    line-height: 30px;
    margin-left: -3px;
}

.result {
    height: 21px;
    border-top: 1px solid #000;
    background: #ffffce;
    padding-left: 3px;
    font: 15px/20px "Liberation Mono", monospace;
}

.serif {
    font-family: "Liberation Serif", serif;
}


/* bottom bars */
.prompt {
    height: 34px;
    flex: none;
    display: flex;
    gap: 2px;
    padding: 1px 0 1px 2px;
    font-size: 12px;
    line-height: 32px;
    background: #000;
}

.prompt > * {
    background: #ffffce;
    height: 32px;
}

.prompt .well {
    background: #53ceaf;
    padding: 2px;
    width: 29px;
}

.prompt .well .icon {
    width: 25px;
    height: 28px;
}

.prompt .icon svg {
    width: 20px;
    height: 20px;
}

.prompt .well svg {
    width: 18px;
    height: 18px;
}

.prompt label {
    width: 46px;
    padding-left: 2px;
}

.xybox {
    width: 170px;
    padding: 2px;
    display: flex;
}

.xybox input {
    flex: 1;
    min-width: 0;
    background-color: #ffffce;
    border: 2px solid;
    border-color: #8f8f75 #d6d6b0 #d6d6b0 #8f8f75;
}

.hint {
    flex: 1;
    padding-left: 3px;
    white-space: nowrap;
}

.prompt .units {
    width: 73px;
    padding: 2px 0 2px 6px;
    background: #53ceaf;
    font-size: 15px;
}

.units .option {
    width: 72px;
    height: 28px;
    border-width: 2px;
}

.units .option::after {
    right: 8px;
}

.status {
    height: 31px;
    flex: none;
    background: #d8ffff;
    border-top: 3px solid #7d8f8f;
    padding: 1px 1px 2px 2px;
}

.status div {
    height: 25px;
    background: #b4fffe;
    border: solid;
    border-width: 2px 1px 2px 1px;
    border-color: #e6ffff #5f9999 #5f9999 #000;
    text-align: center;
    font-size: 12px;
    line-height: 21px;
}

.taskbar {
    height: 7px;
    flex: none;
    position: relative;
    display: flex;
    gap: 2px;
    padding-left: 135px;
    background: #050a10;
    border-top: 1px solid #5f7480;
}

.task {
    width: 63px;
    background: linear-gradient(90deg, #8b8b8b, #4c4c4c);
    border-top: 1px solid #ccc;
}

.task.gap {
    margin-right: 153px;
}

.task.active {
    background: #a8a8a8;
}

.orb {
    position: absolute;
    left: 9px;
    top: -6px;
}
```
FILE: script.js
```
// layer name, colour, small mark
const groups = [
    [['to', 'white'], ['ts', 'jade', 'pads']],
    [['cs.etch']],
    [['cs', 'orange'], ['pln2t', 'gold'], ['sig3b', 'orange'], ['sig4t', 'orange'], ['pln5b', 'gold']],
    [['ss.etch']],
    [['ss', 'orange'], ['bs', 'jade'], ['bo', 'white']],
    [['drl', 'slate'], ['rout', 'silver']],
    [['tp'], ['bp'], ['panel'], ['break.gbr'], ['marking.gbx'], ['-drlnpth'], ['mill'], ['rou'], ['dd'],
     ['datecode-bs'], ['cvia'], ['npth'], ['biaozhu'], ['d'], ['ydkdrl'], ['dwk'], ['dwkby'],
     ['to.d', '', 'hand'], ['ts.d'], ['cs.d', '', 'hand'], ['pln2t.d'], ['sig3b.d'], ['sig4t.d'], ['pln5b.d'],
     ['ss.d'], ['bs.d'], ['bo.d'], ['drl.d'], ['drlnpth.d'], ['rout.d'], ['tp.d'], ['bp.d'], ['rou.d'], ['panel.d']]
];

const icon = id => `<svg><use href="#${id}"/></svg>`;

document.getElementById('layers').innerHTML = groups.map(group =>
    '<div class="layer-group">' + group.map(([name, color = '', mark]) => {
        const current = name == 'ts';
        return `<label class="layer ${current ? 'current' : ''}">
            <input type="checkbox">
            ${current ? icon('arrow') : '<i></i>'}
            <span class="${color}">${name}${mark ? icon(mark) : ''}</span>
        </label>`;
    }).join('') + '</div>'
).join('');


const checks = [
    ['Board-Drill Checks', 'drill', 'Std (Mils)', '0:00:01', '8 layers processed'],
    ['Signal Layer Checks', 'signal', 'signal (Mi', '0:00:21', '8 layers were processed'],
    ['Power/Ground Checks', 'signal', 'P/G (Mils)', '0:00:05', '2 power/ground layers processed'],
    ['Solder Mask Checks', 'signal', 'Soldermask', '0:00:55', '2 solder mask layers were processed'],
    ['Silk Screen Checks', 'signal', 'Silkscreen', '0:00:01', '2 silk screen layers processed']
];

document.getElementById('checks').innerHTML = checks.map(([name, pic, erf, time, result]) => `
    <div class="check">
        <div class="check-head">
            <label class="enabled"><input type="checkbox" aria-label="${name}" checked>${icon('check')}</label>
            ${icon(pic)}
            <span class="name">${name}</span>
            <button type="button" class="btn erf-btn">ERF:</button>
            <input type="text" class="standard caret" aria-label="ERF model" value="${erf}">
            <button type="button" class="btn icon" aria-label="Help">${icon('help')}</button>
        </div>
        <div class="check-btns">
            <button type="button" class="btn">Parameters...</button>
            <button type="button" class="btn">Ranges...</button>
            <button type="button" class="btn">Online...</button>
        </div>
        <div class="check-run">
            <button type="button" class="btn green icon" aria-label="Run">${icon('man')}</button>
            <button type="button" class="btn green icon" aria-label="Run clipped">${icon('mancut')}</button>
            <button type="button" class="btn green icon" aria-label="Run in profile">${icon('manframe')}</button>
            <div class="when">28 Apr 2021<br>03:57 PM - ${time}</div>
            <button type="button" class="btn green icon zoom" aria-label="Zoom">${icon('lens')}</button>
            <div class="flag">!!</div>
        </div>
        <div class="result">${result}</div>
    </div>
`).join('');


const taskbar = document.getElementById('taskbar');

for (let i = 0; i < 21; i++) {
    const task = document.createElement('div');
    task.className = 'task' + (i == 1 ? ' gap' : '') + (i == 16 ? ' active' : '');
    taskbar.appendChild(task);
}
```
